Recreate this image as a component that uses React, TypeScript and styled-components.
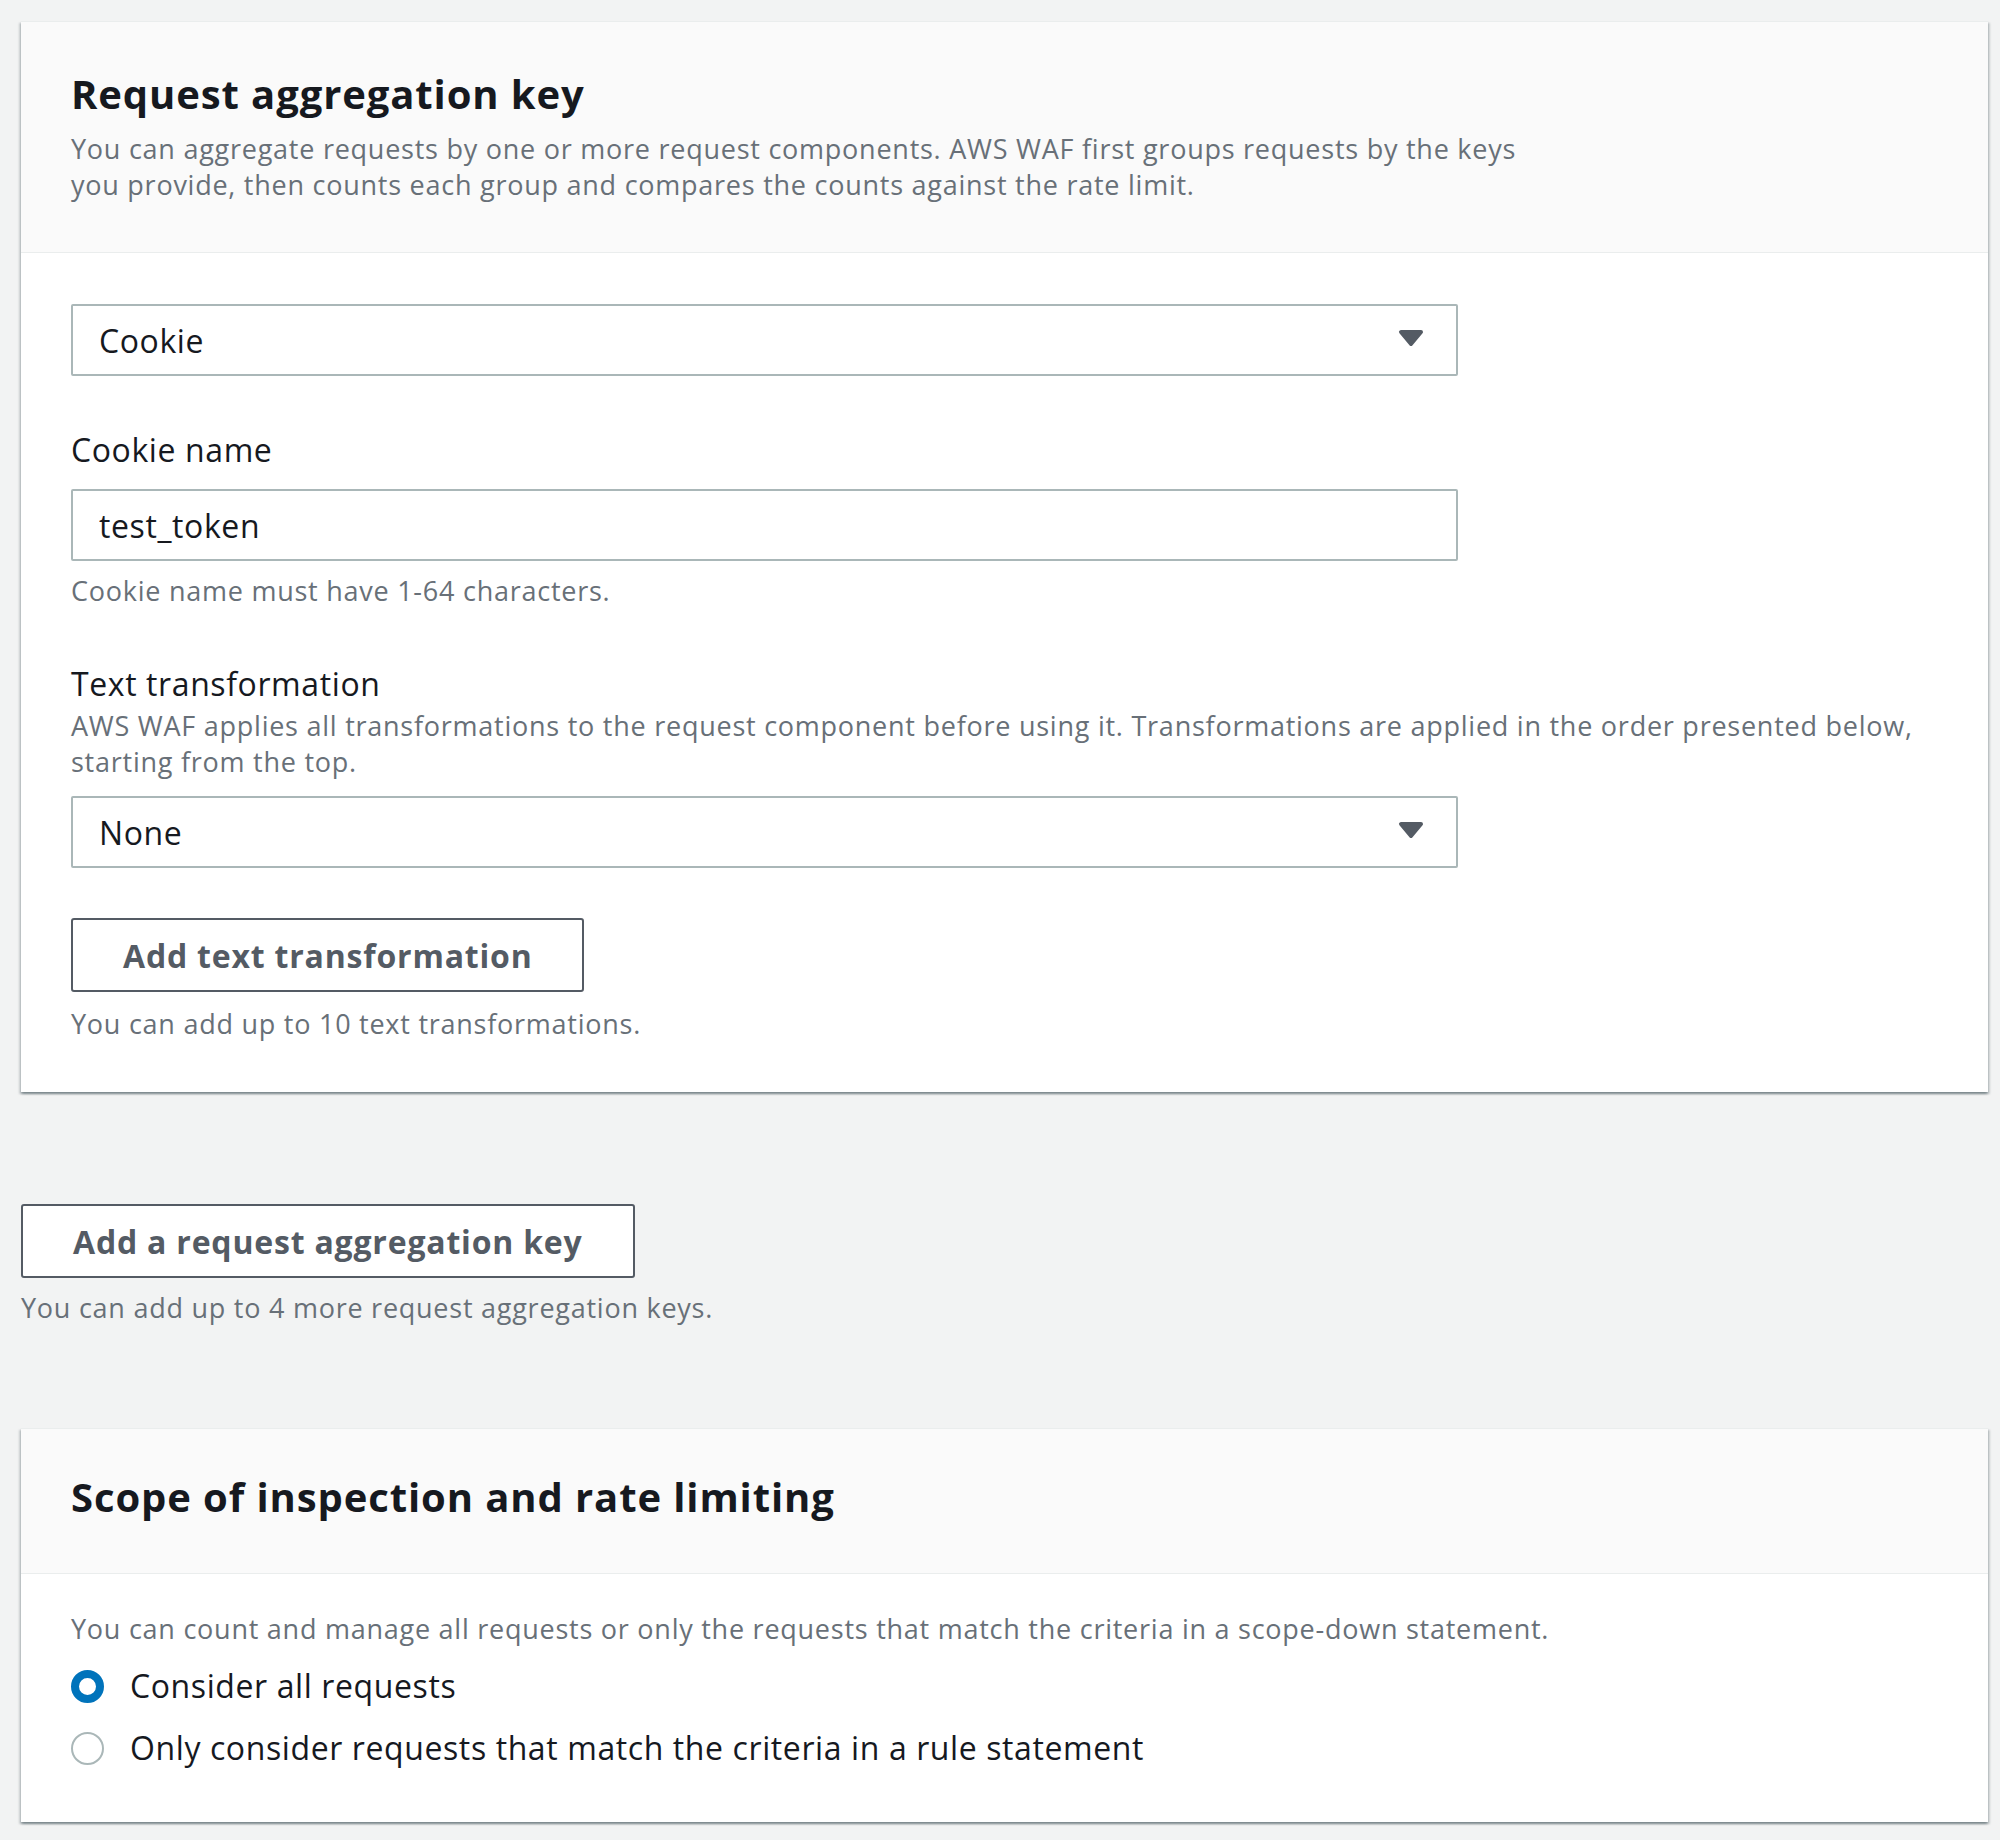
import * as React from "react"
import styled, { createGlobalStyle } from "styled-components"

const GlobalStyle = createGlobalStyle`
    html, body {
        margin: 0;
        padding: 0;
        background: #f2f3f3;
    }
    body {
        font-family: "Open Sans", "Noto Sans", sans-serif;
        color: #16191f;
    }
    * {
        box-sizing: border-box;
    }
`

const Page = styled.div`
    display: flex;
    flex-direction: column;
    padding: 21px 12px 18px 21px;
`

const Container = styled.section`
    background: #ffffff;
    border-top: 1px solid #eaeded;
    box-shadow: 0 2px 2px 0 rgba(0, 28, 36, 0.3),
        2px 2px 2px 0 rgba(0, 28, 36, 0.15),
        -2px 2px 2px 0 rgba(0, 28, 36, 0.15);
`

const ContainerHeader = styled.div<{ $top: number; $bottom: number }>`
    background: #fafafa;
    border-bottom: 1px solid #eaeded;
    padding: ${p => p.$top}px 50px ${p => p.$bottom}px;
`

const Title = styled.h2`
    margin: 0;
    font-size: 40px;
    line-height: 46px;
    font-weight: 700;
    letter-spacing: 0.9px;
    color: #16191f;
`

const Description = styled.p<{ $top?: number }>`
    margin: ${p => p.$top ?? 0}px 0 0;
    font-size: 27px;
    line-height: 36px;
    letter-spacing: 0.75px;
    color: #687078;
    white-space: nowrap;
`

const ContainerBody = styled.div<{ $top: number; $bottom: number }>`
    padding: ${p => p.$top}px 50px ${p => p.$bottom}px;
`

const Label = styled.div<{ $top: number }>`
    margin-top: ${p => p.$top}px;
    font-size: 32px;
    line-height: 44px;
    letter-spacing: 0.6px;
    color: #16191f;
`

const SelectBox = styled.div<{ $top?: number }>`
    margin-top: ${p => p.$top ?? 0}px;
    width: 1387px;
    height: 72px;
    border: 2px solid #aab7b8;
    border-radius: 2px;
    background: #ffffff;
    padding: 0 32px 0 26px;
    display: flex;
    align-items: center;
    justify-content: space-between;
    font-size: 32px;
    letter-spacing: 0.6px;
    color: #16191f;
`

const TextInput = styled.input<{ $top?: number }>`
    display: block;
    margin-top: ${p => p.$top ?? 0}px;
    width: 1387px;
    height: 72px;
    border: 2px solid #aab7b8;
    border-radius: 2px;
    background: #ffffff;
    padding: 0 26px;
    font-family: inherit;
    font-size: 32px;
    letter-spacing: 0.6px;
    color: #16191f;
    outline: none;
`

const Caret = styled.svg`
    display: block;
    margin-top: -4px;
`

const NormalButton = styled.button<{ $top?: number }>`
    display: block;
    margin-top: ${p => p.$top ?? 0}px;
    height: 74px;
    padding: 0 50px;
    background: #ffffff;
    border: 2px solid #545b64;
    border-radius: 3px;
    font-family: inherit;
    font-size: 32px;
    font-weight: 700;
    letter-spacing: 0.8px;
    color: #545b64;
    cursor: pointer;
    align-self: flex-start;
`

const AddKeyArea = styled.div`
    display: flex;
    flex-direction: column;
    align-items: flex-start;
    margin: 112px 0 102px;
`

const RadioRow = styled.label<{ $top: number }>`
    display: flex;
    align-items: center;
    gap: 26px;
    margin-top: ${p => p.$top}px;
    font-size: 32px;
    line-height: 44px;
    letter-spacing: 0.6px;
    color: #16191f;
`

const RadioDot = styled.span<{ $checked?: boolean }>`
    width: 33px;
    height: 33px;
    border-radius: 50%;
    background: #ffffff;
    border: ${p => (p.$checked ? "8px solid #0073bb" : "2px solid #aab7b8")};
    flex: none;
`

const DropdownSelect = ({ value, top }: { value: string; top?: number }) => (
    <SelectBox $top={top}>
        <span>{value}</span>
        <Caret width="26" height="18" viewBox="0 0 26 18">
            <path
                d="M3 3 L23 3 L13 15 Z"
                fill="#545b64"
                stroke="#545b64"
                strokeWidth="4"
                strokeLinejoin="round"
            />
        </Caret>
    </SelectBox>
)

export default function App() {
    return (
        <>
            <GlobalStyle />
            <Page>
                <Container>
                    <ContainerHeader $top={49} $bottom={49}>
                        <Title>Request aggregation key</Title>
                        <Description $top={14}>
                            You can aggregate requests by one or more request components. AWS WAF first groups requests by the keys
                            <br />
                            you provide, then counts each group and compares the counts against the rate limit.
                        </Description>
                    </ContainerHeader>
                    <ContainerBody $top={51} $bottom={50}>
                        <DropdownSelect value="Cookie" />

                        <Label $top={52}>Cookie name</Label>
                        <TextInput $top={17} defaultValue="test_token" readOnly />
                        <Description $top={12}>Cookie name must have 1-64 characters.</Description>

                        <Label $top={53}>Text transformation</Label>
                        <Description $top={2}>
                            AWS WAF applies all transformations to the request component before using it. Transformations are applied in the order presented below,
                            <br />
                            starting from the top.
                        </Description>
                        <DropdownSelect value="None" top={16} />

                        <NormalButton $top={50}>Add text transformation</NormalButton>
                        <Description $top={14}>You can add up to 10 text transformations.</Description>
                    </ContainerBody>
                </Container>

                <AddKeyArea>
                    <NormalButton>Add a request aggregation key</NormalButton>
                    <Description $top={12}>You can add up to 4 more request aggregation keys.</Description>
                </AddKeyArea>

                <Container>
                    <ContainerHeader $top={45} $bottom={53}>
                        <Title>Scope of inspection and rate limiting</Title>
                    </ContainerHeader>
                    <ContainerBody $top={37} $bottom={52}>
                        <Description>
                            You can count and manage all requests or only the requests that match the criteria in a scope-down statement.
                        </Description>
                        <RadioRow $top={17}>
                            <RadioDot $checked />
                            Consider all requests
                        </RadioRow>
                        <RadioRow $top={18}>
                            <RadioDot />
                            Only consider requests that match the criteria in a rule statement
                        </RadioRow>
                    </ContainerBody>
                </Container>
            </Page>
        </>
    )
}
